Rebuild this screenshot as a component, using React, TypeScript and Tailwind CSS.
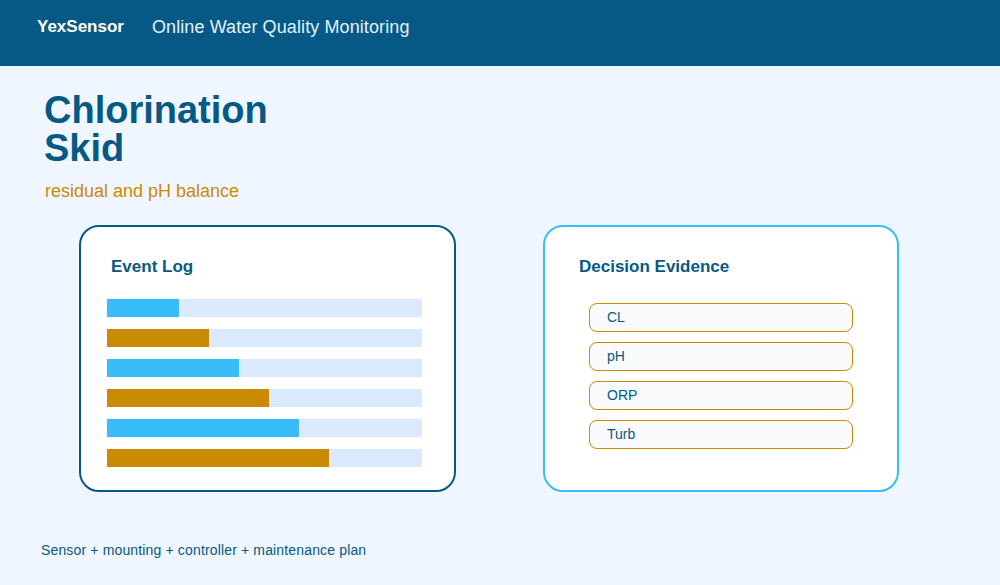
const bars = [
  { w: 72, color: 'bg-[#38bdf8]' },
  { w: 102, color: 'bg-[#ca8a04]' },
  { w: 132, color: 'bg-[#38bdf8]' },
  { w: 162, color: 'bg-[#ca8a04]' },
  { w: 192, color: 'bg-[#38bdf8]' },
  { w: 222, color: 'bg-[#ca8a04]' },
];

const evidence = ['CL', 'pH', 'ORP', 'Turb'];

export default function App() {
  return (
    <div className="min-h-[585px] bg-[#eff6ff] font-['Liberation_Sans',Arial,sans-serif]">
      <header className="h-[66px] bg-[#075985] flex items-start gap-[28px] px-[37px] pt-[17px]">
        <span className="text-[17px] leading-5 font-bold text-white">YexSensor</span>
        <span className="text-[18px] leading-5 tracking-[0.1px] text-[#e0f2fe]">Online Water Quality Monitoring</span>
      </header>

      <main className="px-[44px] pt-[25px]">
        <h1 className="text-[38px] leading-[38px] font-bold text-[#075985]">
          Chlorination
          <br />
          Skid
        </h1>
        <p className="mt-[11px] ml-px text-[18px] leading-[27px] text-[#ca8a04]">residual and pH balance</p>

        <div className="mt-[20px] ml-[35px] flex gap-[87px]">
          <section className="w-[377px] bg-white border-2 border-[#075985] rounded-[20px] px-[26px] pt-[28px] pb-[23px]">
            <h2 className="ml-1 text-[17px] leading-6 font-bold text-[#075985]">Event Log</h2>
            <div className="mt-5 flex flex-col gap-3">
              {bars.map((b, i) => (
                <div key={i} className="w-[315px] h-[18px] bg-[#dbeafe]">
                  <div className={`h-full ${b.color}`} style={{ width: b.w }} />
                </div>
              ))}
            </div>
          </section>

          <section className="w-[356px] bg-white border-2 border-[#38bdf8] rounded-[20px] pl-[34px] pt-[28px]">
            <h2 className="text-[17px] leading-6 font-bold text-[#075985]">Decision Evidence</h2>
            <div className="mt-6 ml-[10px] flex flex-col gap-[10px]">
              {evidence.map((e) => (
                <div
                  key={e}
                  className="w-[264px] h-[29px] flex items-center px-[17px] bg-[#f8fafc] border-[1.5px] border-[#ca8a04] rounded-[8px] text-[14px] text-[#075985]"
                >
                  {e}
                </div>
              ))}
            </div>
          </section>
        </div>

        <p className="mt-[48px] -ml-[3px] text-[14px] leading-5 tracking-[0.15px] text-[#075985]">
          Sensor + mounting + controller + maintenance plan
        </p>
      </main>
    </div>
  );
}
